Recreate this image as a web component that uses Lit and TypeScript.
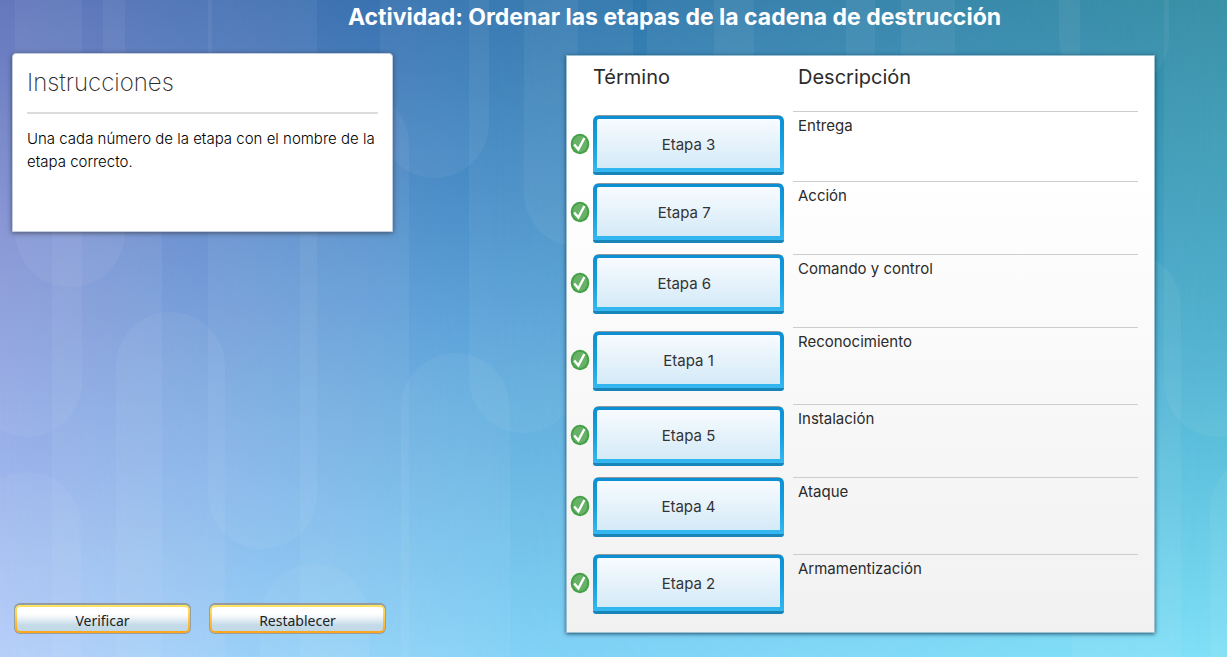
import { LitElement, html, css, svg } from "lit";
import { customElement } from "lit/decorators.js";

interface Stage {
  term: string;
  description: string;
  size: "short" | "medium" | "tall";
  seat: "upper" | "middle" | "lower";
}

const STAGES: Stage[] = [
  { term: "Etapa 3", description: "Entrega", size: "short", seat: "lower" },
  { term: "Etapa 7  ", description: "Acción", size: "medium", seat: "middle" },
  { term: "Etapa 6  ", description: "Comando y control", size: "medium", seat: "upper" },
  { term: "Etapa 1", description: "Reconocimiento", size: "tall", seat: "lower" },
  { term: "Etapa 5", description: "Instalación", size: "medium", seat: "middle" },
  { term: "Etapa 4", description: "Ataque", size: "tall", seat: "upper" },
  { term: "Etapa 2", description: "Armamentización", size: "medium", seat: "upper" },
];

// Translucent capsules of the backdrop: left, top, right, bottom.
const CAPSULES: number[][] = [
  [15, -90, 125, 287],
  [-27, -90, 82, 437],
  [-27, 472, 81, 760],
  [103, -90, 212, 180],
  [116, 312, 225, 760],
  [52, 150, 162, 760],
  [208, -90, 317, 549],
  [300, 90, 409, 760],
  [260, 564, 369, 760],
  [401, 353, 510, 760],
  [380, -90, 489, 178],
  [469, -90, 578, 433],
  [524, -90, 633, 247],
  [647, -90, 754, 300],
  [714, -90, 779, 300],
  [779, -90, 875, 300],
  [846, -90, 955, 300],
  [901, -90, 971, 300],
  [971, -90, 1080, 300],
  [1059, -90, 1169, 92],
  [1072, 252, 1181, 760],
  [1164, -90, 1273, 437],
  [1210, 455, 1319, 760],
];

@customElement("app-backdrop")
class AppBackdrop extends LitElement {
  static styles = css`
    :host {
      position: absolute;
      inset: 0;
      z-index: -1;
    }
    .art {
      display: block;
      width: 100%;
      height: 100%;
    }
  `;

  render() {
    return html`<svg class="art" viewBox="0 0 1227 657" preserveAspectRatio="none" aria-hidden="true">
      <defs>
        <linearGradient id="west" x1="0" y1="0" x2="0" y2="1">
          <stop offset="0" stop-color="#5d71b9" />
          <stop offset="0.35" stop-color="#8493d4" />
          <stop offset="0.7" stop-color="#9cb3ea" />
          <stop offset="1" stop-color="#b4cefa" />
        </linearGradient>
        <linearGradient id="centre" x1="0" y1="0" x2="0" y2="1">
          <stop offset="0" stop-color="#2f73ae" />
          <stop offset="0.35" stop-color="#4c94cc" />
          <stop offset="0.5" stop-color="#5ba4d9" />
          <stop offset="0.7" stop-color="#6cb7e4" />
          <stop offset="1" stop-color="#82d2f6" />
        </linearGradient>
        <linearGradient id="east" x1="0" y1="0" x2="0" y2="1">
          <stop offset="0" stop-color="#308ca3" />
          <stop offset="0.5" stop-color="#48adcb" />
          <stop offset="1" stop-color="#80e0f7" />
        </linearGradient>
        <linearGradient id="fadeA">
          <stop offset="0" stop-color="#fff" stop-opacity="0" />
          <stop offset="0.4" stop-color="#fff" />
        </linearGradient>
        <linearGradient id="fadeB">
          <stop offset="0.4" stop-color="#fff" stop-opacity="0" />
          <stop offset="1" stop-color="#fff" />
        </linearGradient>
        <mask id="maskA"><rect width="1227" height="657" fill="url(#fadeA)" /></mask>
        <mask id="maskB"><rect width="1227" height="657" fill="url(#fadeB)" /></mask>
      </defs>
      <rect width="1227" height="657" fill="url(#west)" />
      <rect width="1227" height="657" fill="url(#centre)" mask="url(#maskA)" />
      <rect width="1227" height="657" fill="url(#east)" mask="url(#maskB)" />
      ${CAPSULES.map(
        ([l, t, r, b]) => svg`<rect x=${l} y=${t} width=${r - l} height=${b - t}
          rx=${(r - l) / 2} fill="#fff" fill-opacity="0.05" />`
      )}
    </svg>`;
  }
}

@customElement("app-root")
class AppRoot extends LitElement {
  static styles = css`
    :host {
      display: block;
      position: relative;
      isolation: isolate;
      min-height: 100vh;
      font-family: Inter, "Liberation Sans", sans-serif;
      color: #2b2b2b;
    }
    .page {
      box-sizing: border-box;
      min-height: 100vh;
      display: flex;
      flex-direction: column;
      padding: 0 72px 24px 12px;
    }
    .title {
      margin: 0;
      padding: 3px 0 0 182px;
      font-size: 23px;
      line-height: 28px;
      font-weight: 700;
      color: #fff;
      text-align: center;
    }
    .columns {
      flex: 1;
      display: grid;
      grid-template-columns: minmax(0, 381px) minmax(0, 589px);
      justify-content: space-between;
      padding-top: 22px;
    }
    .side {
      display: flex;
      flex-direction: column;
      justify-content: space-between;
    }
    .card {
      box-sizing: border-box;
      min-height: 179px;
      padding: 14px;
      background: #fff;
      border: 1px solid #c3cde0;
      border-radius: 4px 4px 0 0;
      box-shadow: 0 1px 5px rgba(50, 50, 60, 0.7);
    }
    .card-title {
      margin: 0;
      padding-bottom: 14px;
      border-bottom: 2px solid #dcdcdc;
      font-size: 24px;
      line-height: 30px;
      font-weight: 200;
    }
    .card-text {
      margin: 13px 0 0;
      font-size: 15px;
      line-height: 23px;
      font-weight: 300;
      color: #000;
    }
    .actions {
      display: flex;
      gap: 20px;
      padding-left: 3px;
    }
    .action {
      box-sizing: border-box;
      width: 175px;
      height: 28px;
      padding: 4px 0 0;
      border: 2px solid transparent;
      border-radius: 5px;
      background:
        linear-gradient(#ffffff 25%, #f4f8fa 40%, #c5dbe8 75%, #c0d8e6) padding-box,
        linear-gradient(#ffe566, #ffa41c) border-box;
      box-shadow: 0 0 0 1px #93a0a8, 0 -1px 0 1px #979797;
      font-family: "Noto Sans", sans-serif;
      font-size: 14px;
      line-height: 20px;
      color: #222;
    }
    .board {
      margin-top: 2px;
      box-sizing: border-box;
      background: linear-gradient(#fff 20%, #f1f1f1);
      border: 1px solid #9cc0cf;
      box-shadow: 0 1px 4px rgba(10, 50, 80, 0.8);
    }
    .stages {
      width: 100%;
      table-layout: fixed;
      border-collapse: separate;
      border-spacing: 0;
    }
    .col-status {
      width: 26px;
    }
    .col-term {
      width: 200px;
    }
    .col-edge {
      width: 16px;
    }
    th,
    td {
      padding: 0;
      vertical-align: top;
      text-align: left;
    }
    th {
      height: 55px;
      box-sizing: border-box;
      padding-top: 8px;
      font-size: 20px;
      line-height: 26px;
      font-weight: 400;
    }
    .head-desc {
      padding-left: 5px;
    }
    .short {
      height: 70px;
    }
    .medium {
      height: 73px;
    }
    .tall {
      height: 77px;
    }
    .lower {
      padding-top: 4px;
    }
    .middle {
      padding-top: 2px;
    }
    .status svg {
      display: block;
      margin: 18px 0 0 3px;
    }
    .desc {
      border-top: 1px solid #cdcdcd;
      padding: 4px 5px 0;
      font-size: 15px;
      line-height: 20px;
    }
    .slot {
      display: block;
      box-sizing: border-box;
      width: 191px;
      height: 60px;
      padding: 3px 0 0;
      border: solid transparent;
      border-width: 4px 4px 7px;
      border-radius: 6px 6px 3px 3px;
      background:
        linear-gradient(#f8fbff, #d4eaf7) padding-box,
        linear-gradient(#8b99a2 1px, #0c8fd2 1px, #14a0e2 50%, #35b8f1 57px, #1785b8 57px) border-box;
      font-family: inherit;
      font-size: 15px;
      line-height: 20px;
      color: #333;
      white-space: pre;
    }
  `;

  private tick() {
    return html`<svg width="20" height="22" viewBox="0 0 20 22" role="img" aria-label="Correcto">
      <ellipse cx="10" cy="11" rx="9.3" ry="10.2" fill="#45a147" />
      <ellipse cx="10" cy="11" rx="7.2" ry="8.2" fill="#67b266" />
      <path d="M4.2 11.4 L8.4 16.4 L14.4 5" fill="none" stroke="#fff" stroke-width="2.4" />
    </svg>`;
  }

  render() {
    return html`
      <app-backdrop></app-backdrop>
      <main class="page">
        <h1 class="title">Actividad: Ordenar las etapas de la cadena de destrucción</h1>
        <div class="columns">
          <div class="side">
            <section class="card">
              <h2 class="card-title">Instrucciones</h2>
              <p class="card-text">Una cada número de la etapa con el nombre de la etapa correcto.</p>
            </section>
            <div class="actions">
              <button class="action" type="button">Verificar</button>
              <button class="action" type="button">Restablecer</button>
            </div>
          </div>
          <section class="board">
            <table class="stages">
              <colgroup>
                <col class="col-status" />
                <col class="col-term" />
                <col />
                <col class="col-edge" />
              </colgroup>
              <thead>
                <tr>
                  <th></th>
                  <th scope="col">Término</th>
                  <th scope="col" class="head-desc">Descripción</th>
                  <th></th>
                </tr>
              </thead>
              <tbody>
                ${STAGES.map(
                  (s) => html`<tr class=${s.size}>
                    <td class="status ${s.seat}">${this.tick()}</td>
                    <td class=${s.seat}><button class="slot" type="button">${s.term}</button></td>
                    <td class="desc">${s.description}</td>
                    <td></td>
                  </tr>`
                )}
              </tbody>
            </table>
          </section>
        </div>
      </main>
    `;
  }
}
